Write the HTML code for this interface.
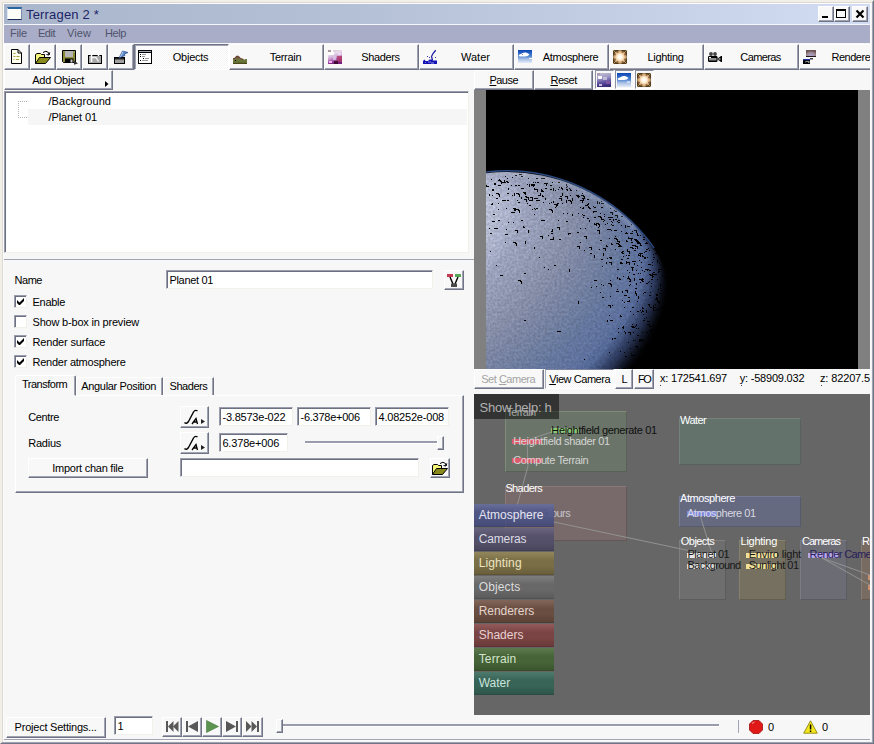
<!DOCTYPE html>
<html>
<head>
<meta charset="utf-8">
<title>Terragen 2 *</title>
<style>
html,body{margin:0;padding:0;}
body{width:874px;height:744px;overflow:hidden;background:#f1efe7;position:relative;
 font-family:"Liberation Sans",sans-serif;font-size:11px;color:#000;line-height:13px;}
.a{position:absolute;box-sizing:border-box;}
.t{position:absolute;white-space:pre;}
.btn{position:absolute;box-sizing:border-box;background:#f8f8f8;border:1px solid;border-color:#fff #707484 #707484 #fff;
 box-shadow:inset -1px -1px 0 #a0a4b2;}
.btnp{position:absolute;box-sizing:border-box;background:#fafafa repeating-conic-gradient(#ffffff 0 25%,#f5f5f5 0 50%) 0 0/2px 2px;border:1px solid;border-color:#707484 #fff #fff #707484;
 box-shadow:inset 1px 1px 0 #a0a4b2;}
.sunk{position:absolute;box-sizing:border-box;background:#fff;border:1px solid;border-color:#9a9eac #f1f0ea #f1f0ea #9a9eac;
 box-shadow:inset 1px 1px 0 #6c7080;}
.cb{position:absolute;box-sizing:border-box;width:13px;height:13px;background:#fff;border:1px solid;border-color:#9a9eac #f1f0ea #f1f0ea #9a9eac;
 box-shadow:inset 1px 1px 0 #6c7080;}
svg{position:absolute;overflow:visible;}
u{text-decoration:underline;}
</style>
</head>
<body>
<!-- p10_frame.py -->
<div class="a" style="left:0px;top:0px;width:874px;height:744px;border:1px solid;border-color:#f1efe7 #707484 #707484 #f1efe7;"></div>
<div class="a" style="left:1px;top:1px;width:872px;height:742px;border:1px solid;border-color:#f1efe7 #a0a4b2 #a0a4b2 #f1efe7;"></div>
<div class="a" style="left:2px;top:2px;width:870px;height:740px;border:1px solid;border-color:#dedad2 #f4f4f4 #f4f4f4 #dedad2;"></div>
<div class="a" style="left:3px;top:3px;width:868px;height:738px;background:#f7f7f7;border:1px solid #fcfcfc;"></div>
<div class="a" style="left:4px;top:4px;width:866px;height:20px;background:linear-gradient(90deg,#aab6cc 0%,#b4c0d6 40%,#d2dcf2 100%);"></div>
<div class="a" style="left:4px;top:24px;width:866px;height:1px;background:#f4f6fa;"></div>
<div class="a" style="left:7px;top:7px;width:15px;height:13px;background:#fdfdf8;border-top:2px solid #2a64a0;border-bottom:1px solid #1c2a5c;border-right:1px solid #7c8cb0;border-left:1px solid #dfe6f4;"></div>
<div class="t" style="left:26px;top:7px;font-size:13px;line-height:15px;color:#1c2466;letter-spacing:0.181px;">Terragen 2 *</div>
<div class="btn" style="left:818px;top:6px;width:16px;height:16px;"></div>
<div class="btn" style="left:834px;top:6px;width:16px;height:16px;"></div>
<div class="btn" style="left:852px;top:6px;width:16px;height:16px;"></div>
<svg style="left:818px;top:6px" width="50" height="16" viewBox="0 0 50 16"><rect x="4" y="10" width="6" height="2" fill="#000"/><rect x="18.5" y="4.500" width="9" height="7" fill="none" stroke="#000"/><rect x="18" y="3" width="10" height="2" fill="#000"/><path d="M38.500 4.500 L45.500 11.500 M45.500 4.500 L38.500 11.500" stroke="#000" stroke-width="2.2"/></svg>
<div class="a" style="left:4px;top:25px;width:866px;height:18px;background:#a9adc8;"></div>
<div class="t" style="left:10px;top:27px;font-size:11px;line-height:13px;color:#50546c;letter-spacing:-0.184px;">File</div>
<div class="t" style="left:38px;top:27px;font-size:11px;line-height:13px;color:#50546c;letter-spacing:-0.492px;">Edit</div>
<div class="t" style="left:67px;top:27px;font-size:11px;line-height:13px;color:#50546c;letter-spacing:0.086px;">View</div>
<div class="t" style="left:105px;top:27px;font-size:11px;line-height:13px;color:#50546c;letter-spacing:-0.406px;">Help</div>
<!-- p20_toolbar.py -->
<div class="btn" style="left:4px;top:44px;width:26px;height:26px;"></div>
<div class="btn" style="left:30px;top:44px;width:26px;height:26px;"></div>
<div class="btn" style="left:56px;top:44px;width:26px;height:26px;"></div>
<div class="btn" style="left:82px;top:44px;width:26px;height:26px;"></div>
<div class="btn" style="left:108px;top:44px;width:26px;height:26px;"></div>
<svg style="left:11px;top:49px;" width="12" height="16" viewBox="0 0 12 16"><path d="M0.5 0.5 H7 L10.5 4 V14.5 H0.5 Z" fill="#fffff0" stroke="#000"/><path d="M7 0.5 V4 H10.5" fill="none" stroke="#000"/><path d="M2.5 4.5h2 M2.5 7.5h2 M5.5 7.5h3 M2.5 10.5h1 M5 10.5h3" stroke="#a8a030" stroke-width="1"/></svg>
<svg style="left:34px;top:49px;" width="18" height="16" viewBox="0 0 18 16"><path d="M1.5 14.5 V5.5 L3 4.5 H6.5 L7.5 5.5 H10.5 V8" fill="#f4f47a" stroke="#000"/><path d="M1.5 14.5 L5.5 8.5 H16.5 L11.5 14.5 Z" fill="#8a8a1c" stroke="#000"/><path d="M9 3.5 Q12 1 14.5 3.5 L15 6 M15 6 l-2.5 -0.5 M15 6 l0.8 -2.6" fill="none" stroke="#000"/></svg>
<svg style="left:62px;top:50px;" width="17" height="15" viewBox="0 0 17 15"><path d="M0.5 0.5 H13.5 V12.5 H1.5 L0.5 11.5 Z" fill="#8a8a3a" stroke="#000"/><rect x="3" y="1" width="8" height="6" fill="#b4b4b4"/><rect x="3" y="8.5" width="8.5" height="4" fill="#000"/><rect x="8.5" y="9.5" width="2" height="3" fill="#c8c8c8"/><rect x="11.7" y="1.5" width="1" height="1" fill="#d8d8a0"/><path d="M12 10.5 L16 13.5 L12 14.8 Z" fill="#333"/></svg>
<svg style="left:88px;top:50px;" width="15" height="15" viewBox="0 0 15 15"><rect x="0.5" y="5.5" width="13" height="8" fill="#a8a8a8" stroke="#000"/><path d="M3.5 12 V3.5 L4.5 1.5 H8.5 L10.5 3.5 V6" fill="none" stroke="#fff" stroke-width="1.6"/><path d="M4 7.5 H8 L10.5 11.5" fill="none" stroke="#f4f4f4" stroke-width="1.4"/></svg>
<svg style="left:113px;top:49px;" width="17" height="16" viewBox="0 0 17 16"><rect x="1.5" y="8.5" width="10" height="6" fill="#a0a0a0" stroke="#000"/><rect x="2" y="9" width="9" height="1.5" fill="#222"/><path d="M6 9 L9.5 2 L15 3.5 L11.5 5 L12 6.5 Z" fill="#5a88c8" stroke="#28488c" stroke-width="0.7"/><path d="M10 2.5 L7.5 8" stroke="#cfe0f8" stroke-width="0.8"/></svg>
<div class="btnp" style="left:134px;top:44px;width:95px;height:26px;"></div>
<div class="t" style="left:172.8px;top:51px;font-size:11px;line-height:13px;color:#000;letter-spacing:-0.257px;">Objects</div>
<div class="btn" style="left:229px;top:44px;width:95px;height:26px;"></div>
<div class="t" style="left:269.8px;top:51px;font-size:11px;line-height:13px;color:#000;letter-spacing:-0.318px;">Terrain</div>
<div class="btn" style="left:324px;top:44px;width:95px;height:26px;"></div>
<div class="t" style="left:361.2px;top:51px;font-size:11px;line-height:13px;color:#000;letter-spacing:-0.341px;">Shaders</div>
<div class="btn" style="left:419px;top:44px;width:95px;height:26px;"></div>
<div class="t" style="left:461.0px;top:51px;font-size:11px;line-height:13px;color:#000;letter-spacing:0.013px;">Water</div>
<div class="btn" style="left:514px;top:44px;width:95px;height:26px;"></div>
<div class="t" style="left:542.8px;top:51px;font-size:11px;line-height:13px;color:#000;letter-spacing:-0.381px;">Atmosphere</div>
<div class="btn" style="left:609px;top:44px;width:95px;height:26px;"></div>
<div class="t" style="left:647.5px;top:51px;font-size:11px;line-height:13px;color:#000;letter-spacing:-0.318px;">Lighting</div>
<div class="btn" style="left:704px;top:44px;width:95px;height:26px;"></div>
<div class="t" style="left:740.3px;top:51px;font-size:11px;line-height:13px;color:#000;letter-spacing:-0.604px;">Cameras</div>
<div class="btn" style="left:799px;top:44px;width:71px;height:26px;border-right:none;box-shadow:inset 0 -1px 0 #a0a4b2;"></div>
<div class="a" style="left:799px;top:44px;width:71px;height:26px;overflow:hidden"><div class="t" style="left:32.5px;top:7px;font-size:11px;line-height:13px;color:#000;letter-spacing:-0.484px;">Renderers</div>
</div>
<svg style="left:138px;top:50px;" width="14" height="14" viewBox="0 0 14 14"><rect x="0.5" y="0.5" width="13" height="13" fill="#fff" stroke="#000"/><rect x="0" y="0" width="14" height="3" fill="#000"/><rect x="1" y="1" width="12" height="1" fill="#9aa6b4"/><rect x="4" y="0" width="9" height="1" fill="#000"/><rect x="2" y="4" width="1" height="1" fill="#000"/><rect x="2" y="6" width="1" height="1" fill="#000"/><rect x="5" y="8" width="1" height="1" fill="#000"/><rect x="2" y="10" width="1" height="1" fill="#000"/><rect x="4" y="4" width="4" height="1" fill="#9a9a9a"/><rect x="4" y="6" width="3" height="1" fill="#9a9a9a"/><rect x="7" y="8" width="4" height="1" fill="#9a9a9a"/><rect x="4" y="10" width="6" height="1" fill="#9a9a9a"/></svg>
<svg style="left:233px;top:55px;" width="14" height="9" viewBox="0 0 14 9"><defs><linearGradient id="te1" x1="0" y1="0" x2="0" y2="1"><stop offset="0.1" stop-color="#74483a"/><stop offset="0.5" stop-color="#6e7a3e"/><stop offset="0.85" stop-color="#5e6e32"/><stop offset="1" stop-color="#4c4a1c"/></linearGradient></defs><path d="M0 9 V3 H1.5 L3.5 1 H5.5 L8 3.5 H9.5 L10.5 4.5 H12 L12.5 4 H14 V9 Z" fill="url(#te1)"/><path d="M0 3.5 H1.5 L3.5 1.2 H5.5 L8 4 H9.5 L10.5 5" fill="none" stroke="#6a4434" stroke-width="1"/><rect x="0" y="8" width="14" height="1" fill="#4c4a1c"/><rect x="2" y="5" width="1" height="1" fill="#000"/></svg>
<svg style="left:328px;top:50px;" width="14" height="14" viewBox="0 0 14 14"><defs><linearGradient id="sh1" x1="0" y1="0" x2="0.3" y2="1"><stop offset="0" stop-color="#d4c6d0"/><stop offset="0.35" stop-color="#e8dcec"/><stop offset="0.6" stop-color="#d0a4d4"/><stop offset="0.82" stop-color="#a050a4"/><stop offset="1" stop-color="#742080"/></linearGradient></defs><rect width="14" height="14" fill="url(#sh1)"/><rect x="0" y="2" width="6" height="3" fill="#fff"/><rect x="2" y="0" width="3" height="2" fill="#fff"/><rect x="0" y="0" width="3" height="2" fill="#a89898"/><rect x="9" y="6" width="5" height="6" fill="#b03868" opacity="0.8"/><rect x="6" y="11" width="4" height="3" fill="#3a0828" opacity="0.9"/><rect x="1" y="11" width="3" height="2" fill="#f4b0f0"/><rect x="5" y="6" width="3" height="4" fill="#d8c8e4" opacity="0.8"/><rect x="10" y="3" width="3" height="2" fill="#f0e4f4" opacity="0.8"/></svg>
<svg style="left:423px;top:50px;" width="14" height="14" viewBox="0 0 14 14"><path d="M0 14 V11 L1.5 9.5 L2.5 11 H5 L6.5 9.5 H9 L10 10.5 H14 V14 Z" fill="#1414b4"/><path d="M9.5 10 L8.5 6.5 L10 3.5 L12.5 0.5" fill="none" stroke="#2424a4" stroke-width="1.3"/><rect x="4" y="6" width="1" height="1" fill="#3434a4"/><rect x="6" y="7" width="1" height="1" fill="#3434a4"/><rect x="12" y="7" width="1" height="1" fill="#3434a4"/><rect x="12" y="0" width="1" height="1" fill="#3434a4"/><rect x="2" y="12" width="1" height="1" fill="#7a7ae0"/><rect x="5" y="11.5" width="3" height="1" fill="#8a8ae8"/><rect x="8" y="12.5" width="3" height="1" fill="#9a9af0"/></svg>
<svg style="left:518px;top:50px;" width="14" height="13" viewBox="0 0 14 13"><defs><linearGradient id="at1" x1="0" y1="0" x2="0" y2="1"><stop offset="0" stop-color="#0a44b4"/><stop offset="0.45" stop-color="#4a80d0"/><stop offset="0.7" stop-color="#a8c0e4"/><stop offset="1" stop-color="#e4ecf8"/></linearGradient></defs><rect width="14" height="13" fill="url(#at1)"/><path d="M0.5 5.5 Q1 4 3 4 Q5 2 8 2.5 Q10.5 3.5 11.5 4.5 Q10 6.5 7 6.5 H1.5 Z" fill="#fff"/><rect x="11" y="8" width="3" height="1" fill="#fff"/><rect x="4" y="4" width="1" height="1" fill="#8898c0"/></svg>
<svg style="left:613px;top:50px;" width="14" height="14" viewBox="0 0 14 14"><defs><radialGradient id="li1"><stop offset="0" stop-color="#ffffff"/><stop offset="0.38" stop-color="#fff2dc"/><stop offset="0.62" stop-color="#ecc494"/><stop offset="0.86" stop-color="#b48858"/><stop offset="1" stop-color="#5c4420"/></radialGradient></defs><rect width="14" height="14" fill="#3c2c14"/><rect width="14" height="14" fill="url(#li1)"/><path d="M0 0L4 4M14 0L10 4M0 14L4 10M14 14L10 10M7 0V2.500M7 14V11.500M0 7H2.500M14 7H11.500" stroke="#f8e0b8" stroke-width="0.7" opacity="0.7"/><path d="M3.500 0L5 3M10.500 0L9 3M3.500 14L5 11M10.500 14L9 11M0 3.500L3 5M0 10.500L3 9M14 3.500L11 5M14 10.500L11 9" stroke="#2c1c08" stroke-width="0.8" opacity="0.6"/></svg>
<svg style="left:708px;top:52px;" width="14" height="10" viewBox="0 0 14 10"><circle cx="3" cy="2" r="1.9" fill="#444"/><circle cx="7" cy="2" r="1.9" fill="#444"/><rect x="0" y="4" width="9.5" height="6" rx="1.2" fill="#000"/><rect x="1" y="6" width="7.5" height="2.5" fill="#909090"/><rect x="1" y="5" width="2" height="1" fill="#fff"/><path d="M9 7 L13 4 H14 V10 H13 Z" fill="#000"/><rect x="10.5" y="6" width="2" height="2" fill="#808080"/></svg>
<svg style="left:803px;top:50px;" width="14" height="14" viewBox="0 0 14 14"><defs><radialGradient id="re1" cx="0.5" cy="0.8" r="0.7"><stop offset="0" stop-color="#a8a0d8"/><stop offset="0.6" stop-color="#a08c94"/><stop offset="1" stop-color="#6c5454"/></radialGradient></defs><rect x="3" y="0" width="10" height="7" fill="url(#re1)"/><rect x="3" y="6" width="10" height="1" fill="#201818"/><rect x="7" y="8" width="3" height="1.5" fill="#404040"/><rect x="0" y="9" width="7" height="5" fill="#000"/><rect x="0" y="9" width="7" height="1.2" fill="#2434a4"/><rect x="2" y="11" width="4.5" height="2" fill="#909090"/><path d="M1 11 L3 12.5 H5" stroke="#000" fill="none"/></svg>
<!-- p30_left.py -->
<div class="btn" style="left:4px;top:70px;width:109px;height:20px;"></div>
<div class="t" style="left:32.3px;top:74px;font-size:11px;line-height:13px;color:#000;letter-spacing:-0.272px;">Add Object</div>
<svg style="left:105px;top:81px;" width="4" height="6" viewBox="0 0 4 6"><path d="M0 0 L3.5 3 L0 6 Z" fill="#000"/></svg>
<div class="sunk" style="left:4px;top:91px;width:465px;height:162px;"></div>
<div class="a" style="left:28px;top:109px;width:439px;height:16px;background:#f6f6f6;"></div>
<div class="a" style="left:18px;top:101px;width:1px;height:17px;background:linear-gradient(#b4b4b4 50%,transparent 50%) 0 0/1px 2px;"></div>
<div class="a" style="left:18px;top:101px;width:9px;height:1px;background:linear-gradient(90deg,#b4b4b4 50%,transparent 50%) 0 0/2px 1px;"></div>
<div class="a" style="left:18px;top:117px;width:9px;height:1px;background:linear-gradient(90deg,#b4b4b4 50%,transparent 50%) 0 0/2px 1px;"></div>
<div class="t" style="left:48.5px;top:95px;font-size:11px;line-height:13px;color:#000;letter-spacing:0.067px;">/Background</div>
<div class="t" style="left:48.5px;top:111px;font-size:11px;line-height:13px;color:#000;letter-spacing:-0.105px;">/Planet 01</div>
<div class="a" style="left:4px;top:259px;width:470px;height:1px;background:#a0a4b2;"></div>
<div class="t" style="left:14.5px;top:274px;font-size:11px;line-height:13px;color:#000;letter-spacing:-0.461px;">Name</div>
<div class="sunk" style="left:166px;top:270px;width:267px;height:19px;"></div>
<div class="t" style="left:169.5px;top:274px;font-size:11px;line-height:13px;color:#000;letter-spacing:-0.332px;">Planet 01</div>
<div class="btn" style="left:444px;top:270px;width:20px;height:20px;"></div>
<svg style="left:444px;top:270px;" width="20" height="20" viewBox="0 0 20 20"><rect x="3" y="4" width="6" height="3" fill="#c83850"/><rect x="11" y="4" width="6" height="3" fill="#58a858"/><path d="M6 7 L9 14 M14 7 L11 14" fill="none" stroke="#000" stroke-width="1.4"/><rect x="7" y="13.500" width="6" height="3.500" fill="#484848"/></svg>
<div class="cb" style="left:14px;top:295px"></div>
<svg style="left:17px;top:298px;" width="7" height="7" viewBox="0 0 7 7"><path d="M0 2 V5 L2 7 H3 L7 3 V0 L2.5 4.5 Z" fill="#000"/></svg>
<div class="t" style="left:32.5px;top:296px;font-size:11px;line-height:13px;color:#000;letter-spacing:-0.278px;">Enable</div>
<div class="cb" style="left:14px;top:315px"></div>
<div class="t" style="left:32.5px;top:316px;font-size:11px;line-height:13px;color:#000;letter-spacing:-0.194px;">Show b-box in preview</div>
<div class="cb" style="left:14px;top:335px"></div>
<svg style="left:17px;top:338px;" width="7" height="7" viewBox="0 0 7 7"><path d="M0 2 V5 L2 7 H3 L7 3 V0 L2.5 4.5 Z" fill="#000"/></svg>
<div class="t" style="left:32.5px;top:336px;font-size:11px;line-height:13px;color:#000;letter-spacing:-0.173px;">Render surface</div>
<div class="cb" style="left:14px;top:355px"></div>
<svg style="left:17px;top:358px;" width="7" height="7" viewBox="0 0 7 7"><path d="M0 2 V5 L2 7 H3 L7 3 V0 L2.5 4.5 Z" fill="#000"/></svg>
<div class="t" style="left:32.5px;top:356px;font-size:11px;line-height:13px;color:#000;letter-spacing:-0.243px;">Render atmosphere</div>
<div class="a" style="left:15px;top:395px;width:449px;height:98px;background:#f7f7f7;border:1px solid;border-color:#fff #707484 #707484 #fff;box-shadow:inset -1px -1px 0 #a0a4b2;"></div>
<div class="a" style="left:15px;top:375px;width:61px;height:21px;background:#f7f7f7;border:1px solid;border-color:#fff #707484 transparent #fff;box-shadow:inset -1px 0 0 #a0a4b2;border-radius:2px 2px 0 0;"></div>
<div class="a" style="left:16px;top:395px;width:58px;height:2px;background:#f7f7f7;"></div>
<div class="t" style="left:22px;top:378px;font-size:11px;line-height:13px;color:#000;letter-spacing:-0.491px;">Transform</div>
<div class="a" style="left:76px;top:377px;width:87px;height:18px;background:#f7f7f7;border:1px solid;border-color:#fff #707484 transparent #fff;box-shadow:inset -1px 0 0 #a0a4b2;border-bottom:none;"></div>
<div class="t" style="left:81.3px;top:380px;font-size:11px;line-height:13px;color:#000;letter-spacing:-0.338px;">Angular Position</div>
<div class="a" style="left:163px;top:377px;width:51px;height:18px;background:#f7f7f7;border:1px solid;border-color:#fff #707484 transparent #fff;box-shadow:inset -1px 0 0 #a0a4b2;border-bottom:none;"></div>
<div class="t" style="left:169.5px;top:380px;font-size:11px;line-height:13px;color:#000;letter-spacing:-0.441px;">Shaders</div>
<div class="t" style="left:28.3px;top:411px;font-size:11px;line-height:13px;color:#000;letter-spacing:-0.372px;">Centre</div>
<div class="btn" style="left:180px;top:406px;width:29px;height:22px;"></div>
<svg style="left:183px;top:409px;" width="22" height="16" viewBox="0 0 22 16"><path d="M1.5 13.5 Q3.5 15.5 5.5 12.5 L10.5 3 Q12 0.5 14.5 1.8" fill="none" stroke="#000" stroke-width="1.4"/><path d="M9 15 L13 9.5 L14.5 15 M10.5 13 H14" fill="none" stroke="#000" stroke-width="1.3"/><path d="M18 10 L22 12.5 L18 15 Z" fill="#222"/></svg>
<div class="sunk" style="left:219px;top:407px;width:74px;height:19px;"></div>
<div class="t" style="left:222.5px;top:411px;font-size:11px;line-height:13px;color:#000;letter-spacing:-0.221px;">-3.8573e-022</div>
<div class="sunk" style="left:297px;top:407px;width:74px;height:19px;"></div>
<div class="t" style="left:300.5px;top:411px;font-size:11px;line-height:13px;color:#000;letter-spacing:-0.254px;">-6.378e+006</div>
<div class="sunk" style="left:375px;top:407px;width:74px;height:19px;"></div>
<div class="t" style="left:378.5px;top:411px;font-size:11px;line-height:13px;color:#000;letter-spacing:-0.201px;">4.08252e-008</div>
<div class="t" style="left:28.3px;top:437px;font-size:11px;line-height:13px;color:#000;letter-spacing:-0.258px;">Radius</div>
<div class="btn" style="left:180px;top:432px;width:29px;height:22px;"></div>
<svg style="left:183px;top:435px;" width="22" height="16" viewBox="0 0 22 16"><path d="M1.5 13.5 Q3.5 15.5 5.5 12.5 L10.5 3 Q12 0.5 14.5 1.8" fill="none" stroke="#000" stroke-width="1.4"/><path d="M9 15 L13 9.5 L14.5 15 M10.5 13 H14" fill="none" stroke="#000" stroke-width="1.3"/><path d="M18 10 L22 12.5 L18 15 Z" fill="#222"/></svg>
<div class="sunk" style="left:219px;top:433px;width:69px;height:19px;"></div>
<div class="t" style="left:222.4px;top:437px;font-size:11px;line-height:13px;color:#000;letter-spacing:-0.162px;">6.378e+006</div>
<div class="a" style="left:305px;top:441px;width:133px;height:2px;background:#989cac;"></div>
<div class="a" style="left:305px;top:443px;width:133px;height:1px;background:#fff;"></div>
<div class="a" style="left:437px;top:436px;width:7px;height:14px;background:#f7f7f7;border:1px solid;border-color:#fff #707484 #707484 #fff;box-shadow:inset -1px -1px 0 #a0a4b2;"></div>
<div class="btn" style="left:28px;top:458px;width:120px;height:20px;"></div>
<div class="t" style="left:52.2px;top:462px;font-size:11px;line-height:13px;color:#000;letter-spacing:-0.250px;">Import chan file</div>
<div class="sunk" style="left:180px;top:458px;width:239px;height:19px;"></div>
<div class="btn" style="left:430px;top:458px;width:20px;height:20px;"></div>
<svg style="left:431px;top:460px;" width="18" height="16" viewBox="0 0 18 16"><path d="M1.5 14.5 V5.5 L3 4.5 H6.5 L7.5 5.5 H10.5 V8" fill="#f4f47a" stroke="#000"/><path d="M1.5 14.5 L5.5 8.5 H16.5 L11.5 14.5 Z" fill="#8a8a1c" stroke="#000"/><path d="M9 3.5 Q12 1 14.5 3.5 L15 6 M15 6 l-2.5 -0.5 M15 6 l0.8 -2.6" fill="none" stroke="#000"/></svg>
<!-- p40_preview.py -->
<div class="btn" style="left:474px;top:70px;width:60px;height:20px;"></div>
<div class="t" style="left:489.5px;top:74px;font-size:11px;line-height:13px;color:#000;letter-spacing:-0.541px;"><u>P</u>ause</div>
<div class="btn" style="left:534px;top:70px;width:59px;height:20px;"></div>
<div class="t" style="left:550.4px;top:74px;font-size:11px;line-height:13px;color:#000;letter-spacing:-0.450px;"><u>R</u>eset</div>
<div class="a" style="left:595px;top:70px;width:19px;height:19px;background:#f7f7f7;border:1px solid;border-color:#8c90a0 #fff #fff #8c90a0;"></div>
<div class="a" style="left:615px;top:70px;width:19px;height:19px;background:#f7f7f7;border:1px solid;border-color:#8c90a0 #fff #fff #8c90a0;"></div>
<div class="a" style="left:635px;top:70px;width:19px;height:19px;background:#f7f7f7;border:1px solid;border-color:#8c90a0 #fff #fff #8c90a0;"></div>
<svg style="left:597px;top:73px;" width="14" height="14" viewBox="0 0 14 14"><defs><linearGradient id="pv1" x1="0" y1="0" x2="0.2" y2="1"><stop offset="0" stop-color="#c8c0d0"/><stop offset="0.4" stop-color="#9c98c4"/><stop offset="0.75" stop-color="#5c4c9c"/><stop offset="1" stop-color="#3c2c7c"/></linearGradient></defs><rect width="14" height="14" fill="url(#pv1)"/><rect x="1" y="3" width="4" height="3" fill="#fff" opacity="0.9"/><rect x="0" y="0" width="3" height="2" fill="#b098a8"/><rect x="6" y="4" width="4" height="3" fill="#d8d0e8" opacity="0.7"/><rect x="9" y="8" width="4" height="3" fill="#8c5ca4" opacity="0.8"/><rect x="2" y="11" width="3" height="2" fill="#e8d8f4" opacity="0.8"/></svg>
<svg style="left:617px;top:73px;" width="14" height="14" viewBox="0 0 14 14"><defs><linearGradient id="pv2" x1="0" y1="0" x2="0" y2="1"><stop offset="0" stop-color="#0a44b4"/><stop offset="0.45" stop-color="#4a80d0"/><stop offset="0.7" stop-color="#a8c0e4"/><stop offset="1" stop-color="#e4ecf8"/></linearGradient></defs><rect width="14" height="14" fill="url(#pv2)"/><path d="M0.5 6 Q1 4.5 3 4.5 Q5 2.5 8 3 Q10.5 4 11.5 5 Q10 7 7 7 H1.5 Z" fill="#fff"/><rect x="10" y="8.5" width="3" height="1" fill="#fff"/></svg>
<svg style="left:637px;top:73px;" width="14" height="14" viewBox="0 0 14 14"><rect width="14" height="14" fill="#3c2c14"/><rect width="14" height="14" fill="url(#li1)"/><path d="M0 0L4 4M14 0L10 4M0 14L4 10M14 14L10 10M7 0V2.500M7 14V11.500M0 7H2.500M14 7H11.500" stroke="#f8e0b8" stroke-width="0.7" opacity="0.7"/><path d="M3.500 0L5 3M10.500 0L9 3M3.500 14L5 11M10.500 14L9 11M0 3.500L3 5M0 10.500L3 9M14 3.500L11 5M14 10.500L11 9" stroke="#2c1c08" stroke-width="0.8" opacity="0.6"/></svg>
<div class="a" style="left:474px;top:90px;width:396px;height:279px;background:#808080;"></div>
<svg style="left:486px;top:90px;overflow:hidden;" width="372" height="279" viewBox="0 0 372 279"><defs>
<clipPath id="pvc"><rect x="0" y="0" width="372" height="279"/></clipPath>
<clipPath id="plc"><circle cx="21" cy="261" r="179"/></clipPath>
<filter id="plblur" x="-20%" y="-20%" width="140%" height="140%"><feGaussianBlur stdDeviation="2.5"/></filter>
<filter id="plsh" filterUnits="userSpaceOnUse" x="-10" y="60" width="240" height="230" color-interpolation-filters="sRGB"><feGaussianBlur in="SourceGraphic" stdDeviation="1.6" result="b"/><feTurbulence type="fractalNoise" baseFrequency="0.42" numOctaves="2" seed="5" result="n"/><feColorMatrix in="n" type="matrix" values="0.3 0 0 0 0.75  0.3 0 0 0 0.75  0.3 0 0 0 0.75  0 0 0 0 1" result="n2"/><feComposite in="b" in2="n2" operator="arithmetic" k1="1" k2="0" k3="0" k4="0"/></filter>
</defs>
<rect width="372" height="279" fill="#000"/>
<g clip-path="url(#pvc)">
<path d="M-2 82.200 A180.200 180.200 0 0 1 168 158" fill="none" stroke="#3c68b4" stroke-width="1.6" opacity="0.7"/>
<g clip-path="url(#plc)">
<g filter="url(#plsh)"><rect x="-10" y="60" width="240" height="230" fill="#000"/>
<path d="M-124.0 372.0L-130.1 363.5L-135.8 354.5L-141.1 344.9L-146.1 334.5L-150.8 322.9L-154.9 309.9L-158.4 294.9L-160.8 277.4L-161.5 256.8L-159.4 232.6L-152.6 204.3L-138.9 172.9L-116.4 140.7L-84.9 112.3L-47.8 91.9L-10.0 81.1L24.2 78.4L53.1 81.3L76.8 87.1L96.0 94.5L111.7 102.5L124.7 110.7L135.7 118.9L145.1 127.1L153.4 135.2L160.7 143.4L167.3 151.7L173.3 160.3L175.3 171.2L178.4 181.4L179.6 192.6L178.8 204.8L176.1 217.7L171.5 231.2L165.0 245.2L156.8 259.4L146.9 273.7L135.5 288.0L122.6 301.9L108.6 315.4L93.5 328.2L77.5 340.3L60.8 351.5L43.7 361.5L26.4 370.4L9.0 378.0L-8.1 384.1L-24.9 388.8L-41.0 391.9L-56.3 393.5L-70.6 393.4L-83.7 391.7L-95.5 388.5L-105.7 383.7L-114.3 377.4Z" fill="#06080e"/>
<path d="M-126.8 368.2L-132.7 359.5L-138.2 350.4L-143.3 340.6L-148.1 329.9L-152.4 318.1L-156.3 304.7L-159.3 289.5L-161.3 271.9L-161.3 251.3L-158.4 227.3L-151.0 199.7L-137.0 169.5L-114.9 139.1L-84.9 112.3L-49.7 92.7L-13.7 81.8L19.3 78.4L47.8 80.4L71.5 85.5L90.9 92.3L106.9 99.9L120.3 107.8L131.7 115.8L141.4 123.8L150.0 131.7L157.5 139.8L164.4 148.0L170.6 156.4L172.7 167.4L175.8 177.6L177.0 188.8L176.2 201.0L173.5 213.9L168.9 227.4L162.4 241.4L154.2 255.7L144.3 270.0L132.9 284.2L120.0 298.2L106.0 311.7L90.8 324.5L74.8 336.6L58.2 347.8L41.1 357.9L23.7 366.7L6.3 374.3L-10.8 380.5L-27.6 385.1L-43.8 388.3L-59.1 389.8L-73.4 389.7L-86.5 388.1L-98.2 384.8L-108.5 380.0L-117.1 373.8Z" fill="#121727"/>
<path d="M-126.6 362.3L-135.2 355.5L-140.5 346.2L-145.4 336.2L-149.9 325.3L-153.9 313.3L-157.4 299.7L-160.1 284.3L-161.5 266.6L-161.0 246.0L-157.4 222.3L-149.4 195.5L-135.2 166.5L-113.6 137.7L-84.9 112.3L-51.5 93.4L-17.2 82.5L14.8 78.5L42.8 79.7L66.3 84.1L85.9 90.4L102.3 97.5L116.0 105.1L127.6 112.8L137.7 120.6L146.5 128.4L154.3 136.3L161.4 144.3L165.0 154.7L170.0 163.7L173.1 173.8L174.3 185.1L173.5 197.2L170.8 210.2L166.2 223.7L159.7 237.7L151.5 251.9L141.6 266.2L130.2 280.4L117.3 294.4L103.3 307.9L88.2 320.8L72.2 332.8L55.5 344.0L38.4 354.1L21.0 363.0L3.7 370.5L-13.5 376.7L-30.3 381.3L-46.4 384.5L-61.7 386.0L-76.1 385.9L-89.2 384.3L-100.9 381.0L-111.1 376.2L-119.7 370.0Z" fill="#202944"/>
<path d="M-129.1 358.4L-137.6 351.5L-142.6 342.0L-147.3 331.8L-151.5 320.8L-155.3 308.5L-158.4 294.8L-160.7 279.2L-161.6 261.4L-160.5 241.0L-156.4 217.6L-147.9 191.6L-133.6 163.8L-112.5 136.4L-84.9 112.3L-53.1 94.1L-20.3 83.2L10.6 78.7L38.0 79.2L61.4 83.0L81.1 88.6L97.6 95.3L111.6 102.5L123.6 109.9L133.9 117.5L143.0 125.1L151.1 132.9L158.4 140.7L162.2 151.0L167.2 160.0L170.3 170.2L171.5 181.4L170.7 193.5L168.0 206.4L163.4 220.0L156.9 233.9L148.7 248.1L138.8 262.4L127.4 276.7L114.6 290.6L100.5 304.1L85.4 316.9L69.4 329.0L52.8 340.1L35.7 350.2L18.4 359.1L1.0 366.6L-16.2 372.8L-32.9 377.5L-49.0 380.6L-64.3 382.1L-78.6 382.1L-91.7 380.4L-103.5 377.1L-113.7 372.4L-122.3 366.1Z" fill="#2e3c61"/>
<path d="M-131.5 354.5L-139.9 347.3L-144.7 337.7L-149.1 327.4L-153.0 316.2L-156.5 303.8L-159.3 289.9L-161.1 274.3L-161.5 256.5L-159.9 236.2L-155.2 213.2L-146.3 188.0L-132.0 161.3L-111.3 135.2L-84.9 112.3L-54.6 94.8L-23.2 83.8L6.7 79.0L33.5 78.8L56.7 81.9L76.4 87.0L93.1 93.3L107.3 100.1L119.5 107.3L130.1 114.6L139.4 122.0L147.7 129.5L155.2 137.2L159.2 147.5L164.2 156.4L167.3 166.6L168.5 177.8L167.7 189.9L165.0 202.8L160.4 216.3L154.0 230.2L145.7 244.4L135.9 258.7L124.5 272.8L111.7 286.8L97.7 300.2L82.6 313.0L66.6 325.1L50.0 336.2L33.0 346.3L15.7 355.1L-1.6 362.7L-18.8 368.8L-35.5 373.5L-51.6 376.6L-66.9 378.1L-81.1 378.0L-94.2 376.4L-105.9 373.1L-116.1 368.4L-124.7 362.1Z" fill="#3a4a74"/>
<path d="M-133.7 350.4L-142.1 343.2L-146.6 333.4L-150.7 323.0L-154.4 311.6L-157.6 299.1L-160.0 285.1L-161.4 269.4L-161.3 251.7L-159.2 231.6L-154.0 209.1L-144.8 184.6L-130.4 159.0L-110.3 134.1L-84.9 112.3L-55.9 95.4L-25.9 84.5L3.0 79.3L29.2 78.6L52.1 81.1L71.8 85.6L88.6 91.4L103.0 97.9L115.4 104.7L126.2 111.8L135.7 119.0L144.3 126.3L152.0 133.8L156.1 144.0L161.1 152.9L164.2 163.0L165.4 174.2L164.6 186.3L161.9 199.1L157.3 212.6L150.9 226.5L142.7 240.7L132.8 254.9L121.5 269.0L108.7 282.9L94.7 296.3L79.7 309.1L63.8 321.1L47.3 332.2L30.2 342.2L13.0 351.1L-4.3 358.6L-21.4 364.7L-38.0 369.3L-54.1 372.4L-69.3 374.0L-83.5 373.9L-96.6 372.3L-108.2 369.0L-118.4 364.3L-126.9 358.0Z" fill="#4d6190"/>
<path d="M-136.6 344.8L-144.8 337.5L-149.0 327.6L-152.8 317.1L-156.1 305.6L-158.8 292.9L-160.7 278.9L-161.6 263.1L-160.9 245.5L-158.1 225.7L-152.4 203.9L-142.8 180.4L-128.5 156.2L-109.0 132.8L-84.9 112.3L-57.6 96.2L-29.1 85.4L-1.6 79.8L23.8 78.4L46.3 80.2L65.8 84.0L82.7 89.2L97.3 95.1L110.0 101.6L121.0 108.3L130.8 115.1L139.6 122.2L147.5 129.3L151.8 139.5L156.7 148.4L159.8 158.5L161.0 169.6L160.2 181.6L157.5 194.4L153.0 207.8L146.6 221.6L138.4 235.7L128.6 249.8L117.3 263.9L104.6 277.7L90.7 291.0L75.8 303.8L60.0 315.7L43.5 326.7L26.6 336.7L9.4 345.5L-7.8 353.0L-24.8 359.1L-41.3 363.7L-57.3 366.8L-72.5 368.3L-86.6 368.2L-99.6 366.6L-111.2 363.4L-121.3 358.6L-129.8 352.4Z" fill="#6076a9"/>
<path d="M-139.7 337.6L-144.6 328.9L-151.7 320.3L-155.0 309.6L-157.8 298.0L-160.0 285.2L-161.3 271.2L-161.5 255.5L-160.1 238.1L-156.7 218.9L-150.3 197.9L-140.4 175.7L-126.3 153.1L-107.6 131.4L-84.9 112.3L-59.4 97.1L-32.9 86.5L-6.8 80.6L17.4 78.5L39.3 79.3L58.6 82.3L75.5 86.7L90.2 92.1L103.1 97.9L114.4 104.1L124.5 110.6L133.5 117.2L139.3 126.7L146.0 134.2L150.9 143.0L154.0 152.9L155.1 164.0L154.4 175.9L151.7 188.5L147.2 201.8L140.8 215.5L132.8 229.5L123.1 243.5L111.9 257.4L99.3 271.1L85.5 284.3L70.7 296.9L55.0 308.8L38.7 319.7L21.9 329.6L4.9 338.3L-12.1 345.7L-28.9 351.7L-45.4 356.3L-61.2 359.4L-76.2 360.9L-90.2 360.8L-103.1 359.2L-114.6 356.0L-124.6 351.3L-133.0 345.2Z" fill="#697eaf"/>
<path d="M-142.5 330.2L-147.4 321.5L-154.1 312.7L-156.9 302.0L-159.2 290.4L-160.8 277.6L-161.6 263.6L-161.1 248.1L-159.1 231.1L-155.0 212.5L-148.2 192.4L-138.1 171.4L-124.1 150.2L-106.3 130.1L-84.9 112.3L-61.1 97.9L-36.2 87.6L-11.7 81.4L11.5 78.7L32.7 78.8L51.7 81.0L68.4 84.7L83.2 89.3L96.2 94.6L107.7 100.3L117.9 106.3L127.2 112.5L133.2 121.7L139.9 129.1L144.7 137.8L147.7 147.7L148.9 158.5L148.1 170.3L145.5 182.8L141.0 195.9L134.8 209.5L126.8 223.3L117.2 237.1L106.1 250.9L93.7 264.4L80.1 277.5L65.4 289.9L49.9 301.7L33.8 312.5L17.2 322.2L0.4 330.8L-16.4 338.1L-33.0 344.1L-49.3 348.6L-64.9 351.7L-79.7 353.1L-93.6 353.1L-106.3 351.5L-117.6 348.3L-127.6 343.7L-135.9 337.6Z" fill="#6c81af"/>
<path d="M-144.9 322.4L-149.7 313.9L-156.2 305.0L-158.5 294.3L-160.3 282.7L-161.4 270.0L-161.5 256.2L-160.5 241.0L-157.9 224.4L-153.2 206.4L-146.0 187.3L-135.8 167.4L-122.1 147.6L-105.0 128.9L-84.9 112.3L-62.6 98.7L-39.3 88.7L-16.2 82.2L5.9 79.0L26.4 78.5L44.9 80.0L61.4 83.0L76.1 86.9L89.2 91.6L100.8 96.8L111.2 102.3L120.6 108.0L126.8 117.0L133.3 124.3L138.1 132.9L141.1 142.6L142.2 153.3L141.4 164.9L138.9 177.3L134.5 190.2L128.3 203.5L120.4 217.1L111.0 230.7L100.1 244.3L87.8 257.6L74.4 270.5L60.0 282.8L44.7 294.3L28.8 305.0L12.5 314.6L-4.0 323.1L-20.6 330.3L-37.0 336.1L-53.0 340.6L-68.4 343.6L-83.0 345.0L-96.7 345.0L-109.2 343.4L-120.4 340.3L-130.2 335.7L-138.4 329.7Z" fill="#6f83af"/>
<path d="M-146.8 314.4L-151.5 306.0L-158.0 297.1L-159.8 286.5L-161.0 275.0L-161.6 262.5L-161.2 248.8L-159.6 234.0L-156.4 217.9L-151.3 200.6L-143.8 182.4L-133.5 163.8L-120.2 145.3L-103.9 127.8L-84.9 112.3L-64.0 99.4L-42.2 89.7L-20.4 83.2L0.7 79.6L20.3 78.4L38.3 79.2L54.5 81.5L69.1 84.9L82.1 88.9L93.8 93.5L104.2 98.5L113.7 103.7L119.9 112.7L126.3 119.8L131.0 128.3L133.9 137.8L135.0 148.3L134.3 159.7L131.8 171.8L127.5 184.5L121.4 197.6L113.7 210.9L104.4 224.3L93.7 237.7L81.7 250.7L68.5 263.4L54.3 275.4L39.3 286.8L23.7 297.2L7.7 306.7L-8.5 315.0L-24.8 322.1L-40.9 327.8L-56.6 332.2L-71.8 335.1L-86.1 336.6L-99.5 336.5L-111.8 335.0L-122.8 331.9L-132.4 327.4L-140.4 321.6Z" fill="#7487af"/>
<path d="M-148.4 306.0L-153.0 297.8L-155.8 288.4L-160.7 278.5L-161.5 267.2L-161.5 254.9L-160.5 241.6L-158.4 227.1L-154.8 211.6L-149.3 195.1L-141.6 177.9L-131.3 160.3L-118.4 143.1L-102.8 126.8L-84.9 112.3L-65.3 100.1L-44.9 90.7L-24.3 84.1L-4.4 80.2L14.4 78.5L31.8 78.7L47.7 80.4L62.0 83.1L74.9 86.6L86.5 90.6L97.0 95.0L104.8 102.9L112.6 108.6L118.9 115.7L123.5 123.9L126.4 133.2L127.4 143.5L126.7 154.7L124.3 166.5L120.0 178.9L114.1 191.7L106.5 204.8L97.5 217.9L87.0 231.0L75.2 243.7L62.3 256.1L48.5 267.9L33.8 279.0L18.5 289.2L2.9 298.5L-13.0 306.6L-29.0 313.5L-44.7 319.2L-60.1 323.5L-74.9 326.3L-88.9 327.7L-102.1 327.7L-114.1 326.1L-124.8 323.2L-134.2 318.8L-142.1 313.0Z" fill="#7a8bb1"/>
<path d="M-149.4 297.3L-153.9 289.3L-156.7 280.2L-161.3 270.3L-161.6 259.2L-161.1 247.3L-159.6 234.3L-157.0 220.4L-152.9 205.5L-147.1 189.8L-139.3 173.5L-129.1 157.1L-116.6 141.0L-101.8 125.8L-84.9 112.3L-66.6 100.8L-47.4 91.7L-28.1 85.1L-9.3 80.9L8.7 78.8L25.4 78.5L40.8 79.5L54.8 81.6L67.6 84.5L79.1 87.9L89.5 91.7L97.2 99.4L104.9 105.0L111.0 111.8L115.5 119.9L118.3 128.9L119.3 139.0L118.6 149.8L116.2 161.4L112.1 173.5L106.3 186.0L99.0 198.7L90.1 211.5L79.9 224.2L68.5 236.6L55.9 248.7L42.4 260.2L28.1 271.0L13.2 280.9L-2.1 289.9L-17.6 297.9L-33.1 304.6L-48.4 310.1L-63.4 314.3L-77.8 317.1L-91.5 318.5L-104.3 318.4L-116.0 316.9L-126.5 314.0L-135.6 309.7L-143.3 304.1Z" fill="#818fb2"/>
<path d="M-149.9 288.2L-154.3 280.4L-157.0 271.6L-158.0 261.9L-161.3 251.1L-160.3 239.5L-158.4 227.0L-155.3 213.7L-150.9 199.5L-144.8 184.6L-136.9 169.3L-126.9 154.0L-114.8 139.0L-100.7 124.9L-84.9 112.3L-67.8 101.4L-49.9 92.7L-31.8 86.2L-14.0 81.8L3.1 79.3L19.1 78.4L33.9 78.9L47.6 80.4L60.0 82.6L71.3 85.5L80.4 92.1L89.2 96.3L96.7 101.7L102.6 108.4L107.0 116.1L109.7 125.0L110.7 134.7L110.0 145.2L107.7 156.4L103.7 168.1L98.1 180.2L90.9 192.6L82.4 205.0L72.5 217.3L61.3 229.4L49.2 241.1L36.1 252.2L22.2 262.7L7.8 272.4L-7.0 281.1L-22.1 288.8L-37.1 295.3L-52.0 300.7L-66.5 304.7L-80.5 307.4L-93.8 308.7L-106.2 308.7L-117.5 307.3L-127.7 304.4L-136.6 300.3L-144.0 294.9Z" fill="#8793b5"/>
<path d="M-149.9 278.7L-154.1 271.2L-156.7 262.7L-157.7 253.4L-160.7 242.8L-159.2 231.7L-156.9 219.7L-153.4 207.0L-148.7 193.5L-142.4 179.6L-134.5 165.3L-124.7 151.0L-113.1 137.1L-99.8 124.1L-84.9 112.3L-68.9 102.1L-52.2 93.7L-35.3 87.3L-18.6 82.8L-2.5 79.9L12.7 78.6L27.0 78.5L40.2 79.4L52.2 81.1L63.3 83.4L72.2 89.7L80.8 93.7L87.9 98.9L93.7 105.3L97.8 112.8L100.4 121.3L101.4 130.7L100.8 140.8L98.5 151.6L94.7 162.9L89.3 174.6L82.4 186.5L74.1 198.5L64.6 210.4L53.8 222.0L42.1 233.3L29.5 244.0L16.1 254.1L2.2 263.4L-12.1 271.9L-26.6 279.3L-41.1 285.6L-55.5 290.7L-69.5 294.6L-83.0 297.3L-95.8 298.5L-107.7 298.5L-118.6 297.1L-128.5 294.4L-137.0 290.4L-144.2 285.1Z" fill="#8e98b7"/>
<path d="M-149.2 268.8L-153.2 261.6L-155.7 253.5L-156.7 244.5L-156.1 234.8L-157.7 223.6L-155.0 212.3L-151.2 200.2L-146.2 187.6L-139.8 174.6L-131.9 161.3L-122.5 148.1L-111.4 135.3L-98.8 123.2L-84.9 112.3L-70.0 102.7L-54.5 94.8L-38.8 88.5L-23.2 83.9L-8.1 80.8L6.3 79.0L19.9 78.4L32.5 78.8L44.1 79.9L54.1 85.1L63.5 87.7L71.7 91.5L78.6 96.5L84.1 102.7L88.1 109.9L90.6 118.0L91.5 127.0L90.9 136.7L88.7 147.1L85.0 157.9L79.9 169.1L73.3 180.5L65.3 191.9L56.2 203.3L45.9 214.5L34.7 225.3L22.6 235.6L9.8 245.2L-3.5 254.2L-17.2 262.2L-31.1 269.3L-45.0 275.4L-58.8 280.3L-72.2 284.1L-85.1 286.6L-97.4 287.8L-108.8 287.7L-119.3 286.4L-128.7 283.8L-136.9 280.0L-143.8 275.0Z" fill="#959dba"/>
<path d="M-147.9 258.4L-151.7 251.6L-154.0 243.8L-154.9 235.3L-154.3 226.0L-155.8 215.3L-152.7 204.7L-148.6 193.4L-143.4 181.7L-137.0 169.6L-129.3 157.3L-120.2 145.2L-109.6 133.4L-97.8 122.4L-84.9 112.3L-71.1 103.4L-56.8 95.8L-42.3 89.7L-27.8 85.1L-13.7 81.7L-0.2 79.7L12.6 78.6L24.6 78.5L35.6 79.0L45.3 83.9L54.2 86.3L62.0 90.0L68.6 94.7L73.8 100.6L77.6 107.4L79.9 115.1L80.8 123.7L80.2 132.9L78.2 142.7L74.7 153.0L69.8 163.6L63.5 174.5L56.0 185.4L47.3 196.2L37.5 206.8L26.8 217.0L15.3 226.8L3.2 236.0L-9.5 244.5L-22.5 252.1L-35.7 258.9L-48.9 264.6L-61.9 269.3L-74.7 272.9L-86.9 275.2L-98.6 276.4L-109.5 276.4L-119.4 275.1L-128.3 272.6L-136.1 269.0L-142.7 264.2Z" fill="#9ba4c0"/>
<path d="M-145.6 247.4L-149.2 240.9L-151.5 233.7L-152.3 225.7L-151.7 217.0L-149.8 207.7L-149.9 196.8L-145.6 186.4L-140.4 175.6L-134.0 164.5L-126.5 153.4L-117.7 142.3L-107.8 131.6L-96.8 121.5L-84.9 112.3L-72.3 104.0L-59.1 96.9L-45.8 91.1L-32.5 86.4L-19.5 83.0L-6.9 80.6L5.0 79.1L16.2 78.5L26.5 82.2L35.9 83.4L44.3 85.7L51.6 89.1L57.7 93.6L62.6 99.1L66.2 105.5L68.4 112.7L69.3 120.8L68.7 129.4L66.8 138.7L63.5 148.3L58.9 158.3L53.0 168.5L45.9 178.7L37.7 188.9L28.6 198.8L18.5 208.5L7.7 217.7L-3.7 226.3L-15.6 234.3L-27.8 241.5L-40.2 247.8L-52.6 253.2L-64.9 257.6L-76.9 261.0L-88.4 263.2L-99.3 264.3L-109.6 264.2L-118.9 263.1L-127.3 260.7L-134.6 257.3L-140.8 252.8Z" fill="#a1aac6"/>
<path d="M-143.2 238.0L-146.5 232.0L-148.6 225.1L-149.4 217.6L-148.9 209.4L-147.1 200.7L-144.0 191.6L-142.9 180.6L-137.6 170.6L-131.4 160.4L-124.1 150.1L-115.7 140.0L-106.3 130.1L-96.0 120.9L-84.9 112.3L-73.2 104.6L-61.0 97.9L-48.7 92.2L-36.3 87.7L-24.2 84.1L-12.5 81.5L-1.4 79.8L9.4 82.4L19.0 82.4L27.8 83.6L35.7 85.8L42.6 89.0L48.4 93.2L53.0 98.4L56.4 104.4L58.4 111.2L59.2 118.8L58.7 127.0L56.9 135.7L53.8 144.8L49.4 154.2L43.9 163.8L37.2 173.4L29.6 183.0L20.9 192.3L11.5 201.4L1.3 210.1L-9.5 218.2L-20.7 225.7L-32.2 232.5L-43.9 238.5L-55.5 243.6L-67.1 247.7L-78.4 250.8L-89.2 252.9L-99.6 254.0L-109.2 253.9L-118.0 252.8L-125.9 250.6L-132.8 247.4L-138.6 243.2Z" fill="#a6aecb"/>
<path d="M-139.9 228.1L-143.0 222.5L-145.0 216.2L-145.7 209.1L-145.2 201.5L-143.6 193.4L-140.7 185.0L-136.6 176.2L-134.6 165.4L-128.4 156.1L-121.4 146.8L-113.5 137.5L-104.7 128.6L-95.2 120.1L-84.9 112.3L-74.1 105.2L-63.0 98.9L-51.7 93.5L-40.4 89.0L-29.2 85.5L-18.5 82.7L-7.6 84.3L2.0 83.4L11.0 83.4L19.2 84.4L26.5 86.5L32.9 89.5L38.3 93.4L42.6 98.2L45.7 103.8L47.7 110.2L48.4 117.2L47.9 124.8L46.2 132.9L43.3 141.4L39.3 150.1L34.1 159.0L27.9 168.0L20.8 176.9L12.8 185.6L4.0 194.1L-5.5 202.1L-15.5 209.7L-25.9 216.7L-36.7 223.0L-47.5 228.6L-58.4 233.3L-69.1 237.1L-79.6 240.1L-89.7 242.0L-99.3 243.0L-108.3 243.0L-116.5 241.9L-123.8 239.9L-130.2 236.9L-135.6 233.0Z" fill="#acb3d0"/>
<path d="M-135.7 217.6L-138.6 212.4L-140.3 206.6L-141.0 200.2L-140.6 193.2L-139.0 185.8L-136.4 178.1L-132.7 170.1L-128.0 161.9L-122.3 153.7L-118.5 143.2L-111.1 135.0L-103.0 127.0L-94.2 119.4L-84.9 112.3L-75.1 105.8L-65.1 100.0L-54.8 94.9L-44.6 90.6L-33.5 90.5L-23.9 87.8L-14.7 86.0L-5.9 85.2L2.3 85.2L9.8 86.1L16.5 88.0L22.4 90.7L27.3 94.3L31.2 98.7L34.1 103.9L35.9 109.7L36.5 116.1L36.1 123.1L34.6 130.5L31.9 138.2L28.2 146.2L23.5 154.4L17.8 162.6L11.3 170.7L3.9 178.7L-4.1 186.4L-12.8 193.8L-21.9 200.7L-31.5 207.1L-41.3 212.9L-51.2 218.0L-61.1 222.3L-71.0 225.8L-80.6 228.5L-89.8 230.3L-98.6 231.2L-106.8 231.1L-114.3 230.2L-121.0 228.3L-126.9 225.6L-131.8 222.0Z" fill="#b6beda"/>
<path d="M-131.7 209.1L-134.4 204.4L-136.0 199.0L-136.6 193.1L-136.2 186.7L-134.8 179.9L-132.4 172.7L-129.0 165.4L-124.6 157.9L-119.4 150.3L-113.4 142.8L-106.6 135.5L-101.6 125.7L-93.5 118.8L-84.9 112.3L-75.9 106.3L-66.7 100.9L-55.9 99.4L-46.7 95.4L-37.7 92.1L-28.8 89.7L-20.3 88.0L-12.3 87.2L-4.7 87.2L2.2 88.1L8.4 89.8L13.8 92.4L18.3 95.7L21.9 99.7L24.5 104.4L26.2 109.8L26.8 115.7L26.4 122.1L25.0 128.9L22.5 136.1L19.1 143.4L14.8 150.9L9.6 158.5L3.5 166.0L-3.2 173.3L-10.6 180.4L-18.6 187.2L-27.0 193.6L-35.8 199.4L-44.8 204.8L-54.0 209.4L-63.1 213.4L-72.2 216.7L-81.0 219.1L-89.5 220.8L-97.6 221.6L-105.1 221.6L-112.0 220.7L-118.2 219.0L-123.6 216.4L-128.1 213.1Z" fill="#bfc6e1"/>
<path d="M-126.8 199.9L-129.2 195.7L-130.7 190.9L-131.3 185.5L-130.9 179.7L-129.6 173.6L-127.4 167.2L-124.4 160.5L-120.4 153.8L-115.7 147.0L-110.3 140.2L-104.2 133.6L-97.5 127.2L-90.3 121.1L-82.7 115.3L-74.8 110.0L-66.7 105.2L-58.5 101.0L-50.2 97.4L-42.0 94.5L-34.1 92.3L-26.4 90.8L-19.1 90.1L-12.3 90.1L-6.1 90.9L-0.5 92.4L4.3 94.7L8.4 97.7L11.7 101.3L14.0 105.6L15.5 110.4L16.1 115.7L15.7 121.5L14.4 127.7L12.2 134.1L9.2 140.7L5.3 147.5L0.6 154.3L-4.9 161.1L-11.0 167.7L-17.7 174.1L-24.8 180.2L-32.4 186.0L-40.4 191.3L-48.5 196.0L-56.7 200.3L-65.0 203.9L-73.1 206.8L-81.1 209.0L-88.8 210.5L-96.1 211.2L-102.9 211.2L-109.1 210.4L-114.7 208.8L-119.5 206.6L-123.6 203.6Z" fill="#c7cfe8"/>
<path d="M-120.7 189.9L-122.8 186.2L-124.1 182.0L-124.6 177.3L-124.3 172.3L-123.1 166.9L-121.2 161.3L-118.5 155.5L-115.1 149.6L-111.0 143.7L-106.3 137.8L-101.0 132.0L-95.1 126.4L-88.9 121.1L-82.2 116.0L-75.3 111.4L-68.2 107.2L-61.0 103.5L-53.8 100.4L-46.7 97.9L-39.7 95.9L-33.1 94.6L-26.7 94.0L-20.8 94.0L-15.3 94.7L-10.5 96.1L-6.2 98.0L-2.7 100.6L0.2 103.8L2.3 107.5L3.6 111.8L4.0 116.4L3.7 121.5L2.6 126.8L0.7 132.4L-2.0 138.2L-5.4 144.1L-9.5 150.1L-14.3 156.0L-19.6 161.8L-25.4 167.4L-31.7 172.7L-38.3 177.7L-45.2 182.3L-52.3 186.5L-59.5 190.2L-66.7 193.3L-73.8 195.9L-80.8 197.8L-87.5 199.1L-93.8 199.8L-99.8 199.7L-105.2 199.0L-110.1 197.7L-114.3 195.7L-117.9 193.1Z" fill="#ced5ed"/>
<path d="M-112.7 178.5L-114.4 175.5L-115.5 172.0L-115.9 168.2L-115.6 164.0L-114.7 159.6L-113.1 155.0L-110.9 150.2L-108.1 145.4L-104.7 140.5L-100.8 135.6L-96.4 130.9L-91.6 126.3L-86.5 121.9L-81.0 117.7L-75.3 113.9L-69.5 110.5L-63.6 107.5L-57.6 104.9L-51.8 102.8L-46.1 101.2L-40.6 100.1L-35.3 99.6L-30.4 99.6L-26.0 100.2L-22.0 101.3L-18.5 102.9L-15.5 105.1L-13.2 107.7L-11.5 110.7L-10.4 114.2L-10.0 118.1L-10.3 122.2L-11.2 126.6L-12.8 131.2L-15.0 136.0L-17.8 140.9L-21.2 145.7L-25.1 150.6L-29.5 155.4L-34.3 160.0L-39.4 164.4L-44.9 168.5L-50.6 172.3L-56.4 175.7L-62.3 178.8L-68.3 181.3L-74.1 183.4L-79.8 185.0L-85.4 186.1L-90.6 186.6L-95.5 186.6L-99.9 186.0L-103.9 184.9L-107.4 183.3L-110.4 181.2Z" fill="#d4dbf1"/>
<path d="M-101.1 164.6L-102.3 162.4L-103.1 159.9L-103.3 157.2L-103.2 154.2L-102.5 151.1L-101.4 147.8L-99.8 144.4L-97.8 140.9L-95.4 137.5L-92.6 134.0L-89.5 130.6L-86.1 127.3L-82.4 124.2L-78.5 121.3L-74.5 118.6L-70.3 116.1L-66.1 113.9L-61.9 112.1L-57.7 110.6L-53.6 109.5L-49.7 108.7L-45.9 108.3L-42.5 108.4L-39.3 108.8L-36.4 109.5L-33.9 110.7L-31.8 112.2L-30.2 114.1L-29.0 116.3L-28.2 118.8L-27.9 121.5L-28.1 124.4L-28.8 127.6L-29.9 130.9L-31.5 134.3L-33.5 137.7L-35.9 141.2L-38.7 144.7L-41.8 148.1L-45.2 151.4L-48.9 154.5L-52.8 157.4L-56.8 160.1L-61.0 162.6L-65.2 164.7L-69.4 166.6L-73.6 168.1L-77.7 169.2L-81.6 170.0L-85.3 170.4L-88.8 170.3L-92.0 169.9L-94.8 169.1L-97.3 168.0L-99.4 166.5Z" fill="#dae0f5"/>
</g>
<path d="M179 272h2M29 85h1M35 130h2M181 248h1M42 139v3M20 139h1M123 148h1M140 165h1M157 274h2v1h1v2M110 196h1M65 143h2M14 95h1M156 268h2M2 96h1M170 219h2M56 99v2h2M38 109h2v2M117 162v3M43 110h4M67 97v3M33 84h3M172 181h1M154 220h1M162 158h1M149 150h2v1h1v2M158 167h2M182 259h4M172 179h1M154 192h1M154 259h2v2M176 185h1M86 107v3M96 103h1M6 113h1M132 130h2M97 125h2M114 150h2M171 189h1M146 177v3M27 118h2v2M180 265h1M173 173h1M128 248h2M135 162h1M163 240h2v2M142 242h2v2M160 219v3M180 260h1M39 106h2M21 103h2M177 251h2M121 229v2M131 131h1M65 112h1M173 181h1M124 206h1M5 89h1M138 262h1M71 112v3M164 217h2M134 155h1M108 117h2M156 242h1M29 140h2v2M19 144h3M136 210h1M162 271h2M20 118h1M131 199h1M146 158h2M130 201h1M174 198h1M151 143h1M151 211h1M129 129h2M17 110h3M41 113h1M149 158h1M179 238h2M150 202v3M36 98h2M165 189h2M149 200v3M148 172v2M175 200h1M153 250h2M58 93h2v2M72 92h2M176 213h2M98 269h1M54 146h2v2M148 160h2M153 152h1M160 278h3M173 274h1M149 271h2M174 235h1M126 135h2M95 105h2v1h1v2M163 205h2M58 177h1M110 133h2v1h1v2M177 216h2v1h1v2M111 140h2v2M76 99h1M172 264h1M157 266h1M182 247h2v2M94 152h1M111 110v3M174 253h3M140 151h2M13 89h1M117 158h2v2M14 91h2M12 95h2M146 217h2M110 135h1M145 134h1M72 113h1M149 256h2v2M126 132h1M124 118h1M135 135h1M118 126h1M163 255h1M59 98h2M102 112v2M144 277h1M46 119h1M164 205h1M82 143h3M48 124h1M63 113h1M4 161h1M173 247h1M32 95h2M142 185v3M167 186h1M8 93h2M26 105h1M48 118h1M158 274v2h2M172 212h1M113 143h1M112 137h1M90 105h2v2M118 126h1M71 137h2v2M120 171v2M178 278v2M67 110v2M161 167h1M177 235h2v1h1v2M107 116h1M164 242h1M103 116v2h2M134 156h2M181 192h2v1h1v2M125 152v2h2M126 247v2M143 209v2M72 99h1M166 244h1M152 270v2M163 265h4M107 122h1M127 128v2M166 172h1M139 241v2M179 252h1M30 119h2v1h1v2M67 146v3M162 214h2M48 97v2M156 250h2M167 235h1M172 182h1M171 211h2v2M96 118h1M102 109h1M173 264v2h2M138 241h1M123 172h2v2M32 112h2M143 148h4M4 143h2M6 131h3M101 109h1M165 193h1M177 262h1M29 95h2M99 138h1M150 271h2M175 203h1M125 131h1M173 179h3M139 266h2M116 207h2M26 87h1M51 92h1M19 152h1M169 209h2M161 180h1M60 93h2M10 103h2v1h1v2M156 251h1M167 238h1M158 278v2M10 175h1M174 250h2M144 221h1M141 172h2v2M178 237h3M112 126h2v1h1v2M142 146v2h2M163 213v3M53 167h1M99 115h1M35 86h2M121 139h4M167 215h1M129 125h2v2M153 189h1M19 86h1M161 231h3M144 258h1M55 88h4M108 190h3M26 122h1M12 119h1M131 179h2M103 129v2M68 114h2v2M64 95h2M108 127h2M80 97h1M150 238h1M119 134h1M157 149h2M160 257h1M141 211h2M154 189h4M18 89v3M42 88h1M97 107v3M116 129h2M155 177h1M175 217h4M31 110h1M160 227h1M51 92h2M76 113h1M177 243h2v2M108 134h3M84 105h1M150 180h1M117 131h1M145 263h1M160 152h1M35 106v2M138 217h1M115 117h2M150 233v2M21 110h2M114 202h1M8 94h2M159 179h4M166 175h1M141 168h2M129 146h1M6 98v2h2M69 117h1M132 238h1M175 267h2v1h1v2M124 122h2v2M172 199h1M41 94h1M123 148h1M49 92h1M21 88h1M160 153h2M141 136h3M80 131h2M96 108h1M129 121h2M170 277v2h2M165 196h1M161 266h1M179 232h4M124 190h1M72 130h1M158 202h2M64 149h3M155 190h2M168 244v2M157 203h1M163 160h1M97 127h1M158 228h1M180 257h1M131 186v2M156 180h1M125 140h1M128 148h2v1h1v2M49 99h2v2M44 107h2v2M149 250h1M167 253h1M65 141h1M135 169h2M82 110h2v1h1v2M180 182h2v2M3 138h1M165 279h2M115 113h3M39 150v3M80 109v3M84 98v2M155 172h1M144 194h1M22 98h1M101 113v2M12 113h1M154 183h1M63 119h2v1h1v2M100 115h1M45 95h4M157 224h1M101 128h2M161 269h2M35 98h1M134 224v2h2M181 204h1M178 261h4M177 250h1M180 217h2M162 174h3M158 168h2M173 228h2v1h1v2M50 88h2M30 85h1M123 129h2M125 127h2M137 278h2v1h1v2M6 99h1M168 217h2M143 191h2M40 107h2v2M179 245h3M94 138h1M173 260v2M47 94h2M156 191h2M27 132h1M164 202h1M173 217v2M55 130h4M145 152h2M177 255h2v2M166 265h2M115 111h1M126 215h1M52 105h2M143 182h1M182 189h2M0 94v2h2M49 119h1M136 200v2M178 248h1M83 98h1M140 141v2h2M174 250h2v2M169 214h1M80 99h2M180 275h2M167 215v3M62 145h1M171 262h1M115 194h1M170 204h2M153 170h1M75 96v2h2M147 250h1M101 128h1M160 271v2h2M12 130h2M161 180h1M137 235v3M147 242h1M68 175h2M43 94h1M168 276h1M10 108h2M92 142h1M166 182v2M105 197h1M73 97h1M164 185h2v2M38 103h1M103 157h2v2M104 163h2M137 186h1M177 233h2v2M107 121h4M57 112h1M174 238h2M81 98v2M133 152h1M161 234h2v2M37 102h2v2M113 159h1M38 183h2M6 105h1M86 125h1M173 276h1M168 248v3M164 273v2M167 169h1M154 145h1M108 164v3M148 149h1M5 114h2M153 251h2M43 115h2M83 178v3M178 187h1M171 169v3M123 262h1M81 96h1M97 116v2M151 175h1M167 169h1M135 171v2h2M172 179h1M138 212h1M3 103v2M144 143h3M181 213h2M134 261h1M132 132h2M79 106h2v2M139 134v3M125 134h1M48 156v2M174 193v3M156 188h1M151 245h2M173 275h1M7 124h2M151 153h2M140 150h1M148 187v3M92 123h1M169 263h2v1h1v2M91 106h3M158 162h1M156 216v2h2M121 168h1M38 230h2M153 249h4M162 252v2M75 96v2h2M101 128h1M170 206v2M94 117h1M7 99h1M144 157h3M145 265h4M28 117v3M136 161v2h2M155 155h1M123 225h1M170 203v2h2M178 260v3M181 277h4M73 108h2v2M151 152h2v1h1v2M124 168h2M14 185h3M154 272h1M176 218h1M47 92h1M37 135v2h2M167 182h2M117 195h1M128 140h3M122 215h2v2M113 111v2M130 153h2v1h1v2M12 90h2v1h1v2M81 123h1M25 122h4M145 148h1M152 238h1M160 159h2M156 264h2M173 252h1M16 110h2M129 159h1M73 149h2M163 180h2M146 171h4M25 95h1M157 230h1M168 242v2M139 200h2v2M141 158v2M170 246h1M142 252h1M158 266h3M96 124h1M145 236h3M22 132h1M162 192h1M122 193h2v1h1v2M8 138h4M162 272h2M22 99h1M159 153h1M141 161h2v2M150 234h1M140 170v3M120 154v2h2M150 192v2M167 259h1M181 206h1M162 274h1M156 164v2h2M16 92h4M165 236h1M20 91h1M177 257v2M158 274h2M98 160h1M171 207v3M165 239h1M151 271h1M69 100h1M116 176h1M76 102v3M146 155h4M94 110h2v2M131 201h2M138 205h2M180 211h2v2M136 237h2M135 126h2M179 273h4M171 230h2v1h1v2M163 236h2M149 236h1M153 163h4M84 98v2h2M160 193h2M163 184h2M90 100h1M86 124h1M154 163v3M152 205v3M151 257h1M146 234h1M80 94h1M98 146h2v2M109 134h2M27 152h2v1h1v2M50 110h4M59 107v2M141 188h2v1h1v2M48 108h4M152 163v2h2M54 102v3M178 269v2M159 161h2M32 190h2v1h1v2M118 130h1M179 212h2M177 245h3M143 148h2v2M157 203h1M158 230h1M167 218v2h2M152 183h1M163 191h1M108 133h1M167 184h4M132 151h2M171 232v2h2M50 118h2M169 261h3M91 142h2M179 188h2M139 205h2M147 224h1M148 149h2v2M30 103h2v1h1v2M82 142v2M151 221h2M134 171v2h2M141 180h1M43 93v3M114 123h1M135 141h1M147 184h2M166 264h2M145 177h3M115 169h2M146 237h3M74 106h2M91 156h2v2M179 238h1M122 127h4M165 240h3M137 166h1M56 104v2h2M142 165h2M160 242h2M143 195h1M124 230h3M142 207h2M182 273v2M172 199h1M58 93h2M166 275h1M128 120h1M169 163h2M149 156h2v2M167 164h1M133 187v2h2M65 99h1M92 210v3M45 94h2v2M178 249h2M148 140h2v2M180 195h1M121 133h1M123 167h3M66 92h1M158 162h1M158 181h1M170 255v2h2M113 112h1M146 141h1M102 115v2M28 102v3M132 242h1M155 270h2M179 256h1M181 261v2h2M62 179h1M159 274h2M136 161h2M156 219v2h2M169 255h1M160 270v2M64 99h1M123 127h3M151 143v2h2M55 98v3M66 138v3M163 174h1M139 143h2M80 95h1M157 147h2M155 222h1M71 241h4M174 203h1M77 123h1M179 227h1M132 156h1M141 200h1M177 273h1M173 216v3M118 124h1M149 198h2M21 90v2h2M171 219h1M167 167h2M180 244h1M178 212h2" fill="none" stroke="#000" stroke-width="1" shape-rendering="crispEdges" transform="translate(0,0.5)"/>
<path d="M-4 83 Q30 80.500 70 90.500 Q115 103 150 139" fill="none" stroke="#f4f6ff" stroke-width="2" opacity="0.55" filter="url(#plblur)"/>
</g>
</g></svg>
<div class="btn" style="left:474px;top:369px;width:70px;height:20px;"></div>
<div class="t" style="left:481.2px;top:373px;font-size:11px;line-height:13px;color:#a4a4a4;letter-spacing:-0.470px;">Set <u>C</u>amera</div>
<div class="a" style="left:545px;top:369px;width:69px;height:20px;background:#fafafa repeating-conic-gradient(#ffffff 0 25%,#f5f5f5 0 50%) 0 0/2px 2px;border:1px solid;border-color:#80849a #fff #fff #a8acb8;"></div>
<div class="t" style="left:549.2px;top:373px;font-size:11px;line-height:13px;color:#000;letter-spacing:-0.439px;"><u>V</u>iew Camera</div>
<div class="btn" style="left:615px;top:369px;width:18px;height:20px;"></div>
<div class="t" style="left:621.5px;top:373px;font-size:11px;line-height:13px;color:#000;">L</div>
<div class="btn" style="left:634px;top:369px;width:20px;height:20px;"></div>
<div class="t" style="left:638px;top:373px;font-size:11px;line-height:13px;color:#000;letter-spacing:-1.391px;">FO</div>
<div class="a" style="left:655px;top:369px;width:215px;height:24px;overflow:hidden"><div class="t" style="left:5px;top:3px;font-size:11px;line-height:13px;color:#000;letter-spacing:-0.210px;">x: 172541.697</div>
<div class="t" style="left:84.79999999999995px;top:3px;font-size:11px;line-height:13px;color:#000;letter-spacing:-0.214px;">y: -58909.032</div>
<div class="t" style="left:165px;top:3px;font-size:11px;line-height:13px;color:#000;letter-spacing:-0.138px;">z: 82207.5</div>
</div>
<div class="a" style="left:660px;top:385px;width:1px;height:1px;background:#444;"></div>
<div class="a" style="left:741px;top:385px;width:1px;height:1px;background:#444;"></div>
<div class="a" style="left:821px;top:385px;width:1px;height:1px;background:#444;"></div>
<!-- p50_network.py -->
<div class="a" style="left:474px;top:394px;width:396px;height:321px;background:#666666;overflow:hidden;"><div class="a" style="left:31px;top:17px;width:122px;height:61px;background:#6a7468;border:1px solid;border-color:#7c8c76 #5a6058 #5a6058 #7c8c76;"></div>
<div class="a" style="left:31px;top:92px;width:122px;height:55px;background:#786a6a;border:1px solid;border-color:#887878 #625858 #625858 #887878;"></div>
<div class="a" style="left:205px;top:24px;width:122px;height:47px;background:#64726c;border:1px solid;border-color:#74847c #56625c #56625c #74847c;"></div>
<div class="a" style="left:205px;top:102px;width:122px;height:31px;background:#666a80;border:1px solid;border-color:#767a94 #565a6c #565a6c #767a94;"></div>
<div class="a" style="left:205px;top:146px;width:47px;height:60px;background:#6e6e6e;border:1px solid;border-color:#7e7e7e #5c5c5c #5c5c5c #7e7e7e;"></div>
<div class="a" style="left:265px;top:146px;width:47px;height:60px;background:#757060;border:1px solid;border-color:#86816c #625e50 #625e50 #86816c;"></div>
<div class="a" style="left:326px;top:146px;width:47px;height:60px;background:#6c6c75;border:1px solid;border-color:#7b7b86 #5b5b63 #5b5b63 #7b7b86;"></div>
<div class="a" style="left:387px;top:146px;width:47px;height:60px;background:#786c62;border:1px solid;border-color:#887c70 #64594f #64594f #887c70;"></div>
<svg style="left:0px;top:0px;" width="396" height="321" viewBox="0 0 396 321"><g fill="none" stroke="#929292" stroke-width="1"><path d="M78 38 L53 46 L54 72 L43 112"/><path d="M80 128 L198 153 L226 159"/><path d="M226 121 L238 160"/><path d="M348 164 L396 181"/><path d="M348 164 L396 191"/></g></svg>
<div class="a" style="left:77px;top:34px;width:28px;height:5px;background:#8cc878;"></div>
<div class="a" style="left:38px;top:45px;width:30px;height:5px;background:#dc5a6c;"></div>
<div class="a" style="left:38px;top:64px;width:30px;height:5px;background:#dc5a6c;"></div>
<div class="a" style="left:39px;top:117px;width:30px;height:5px;background:#a88890;"></div>
<div class="a" style="left:213px;top:117px;width:29px;height:5px;background:#8088e0;"></div>
<div class="a" style="left:213px;top:159px;width:29px;height:5px;background:#e8e8e8;"></div>
<div class="a" style="left:213px;top:170px;width:29px;height:5px;background:#d8d8d8;"></div>
<div class="a" style="left:272px;top:159px;width:31px;height:5px;background:#f0e098;"></div>
<div class="a" style="left:272px;top:170px;width:31px;height:5px;background:#f0e098;"></div>
<div class="a" style="left:334px;top:159px;width:30px;height:5px;background:#b8a8e8;"></div>
<div class="a" style="left:394px;top:181px;width:4px;height:5px;background:#c89070;"></div>
<div class="a" style="left:394px;top:191px;width:4px;height:5px;background:#c89070;"></div>
<div class="t" style="left:77.3px;top:30px;font-size:11px;line-height:13px;color:#101010;letter-spacing:-0.363px;">Heightfield generate 01</div>
<div class="t" style="left:39.2px;top:41px;font-size:11px;line-height:13px;color:#d4d4d4;letter-spacing:-0.351px;">Heightfield shader 01</div>
<div class="t" style="left:39.2px;top:60px;font-size:11px;line-height:13px;color:#d4d4d4;letter-spacing:-0.408px;">Compute Terrain</div>
<div class="t" style="left:31.4px;top:88px;font-size:11px;line-height:13px;color:#fff;letter-spacing:-0.612px;">Shaders</div>
<div class="t" style="left:39.6px;top:113px;font-size:11px;line-height:13px;color:#c4c4cc;letter-spacing:-0.591px;">Base colours</div>
<div class="t" style="left:206px;top:20px;font-size:11px;line-height:13px;color:#fff;letter-spacing:-0.588px;">Water</div>
<div class="t" style="left:206px;top:98px;font-size:11px;line-height:13px;color:#fff;letter-spacing:-0.431px;">Atmosphere</div>
<div class="t" style="left:213px;top:113px;font-size:11px;line-height:13px;color:#d8d8e0;letter-spacing:-0.462px;">Atmosphere 01</div>
<div class="t" style="left:206.8px;top:141px;font-size:11px;line-height:13px;color:#fff;letter-spacing:-0.542px;">Objects</div>
<div class="t" style="left:266.6px;top:141px;font-size:11px;line-height:13px;color:#fff;letter-spacing:-0.268px;">Lighting</div>
<div class="t" style="left:327.9px;top:141px;font-size:11px;line-height:13px;color:#fff;letter-spacing:-0.918px;">Cameras</div>
<div class="t" style="left:388px;top:141px;font-size:11px;line-height:13px;color:#fff;letter-spacing:-0.595px;">Renderers</div>
<div class="t" style="left:213.5px;top:154px;font-size:11px;line-height:13px;color:#181818;letter-spacing:-0.532px;">Planet 01</div>
<div class="t" style="left:213.5px;top:165px;font-size:11px;line-height:13px;color:#181818;letter-spacing:-0.552px;">Background</div>
<div class="t" style="left:274.7px;top:154px;font-size:11px;line-height:13px;color:#181818;letter-spacing:-0.177px;">Enviro light</div>
<div class="t" style="left:274.7px;top:165px;font-size:11px;line-height:13px;color:#181818;letter-spacing:-0.459px;">Sunlight 01</div>
<div class="t" style="left:335.6px;top:154px;font-size:11px;line-height:13px;color:#28205c;letter-spacing:-0.636px;">Render Camera</div>
<div class="a" style="left:0px;top:0px;width:85px;height:25px;background:rgba(0,0,0,0.5);"></div>
<div class="t" style="left:32.4px;top:12px;font-size:11px;line-height:13px;color:#a4a4a4;letter-spacing:-0.661px;">Terrain</div>
<div class="t" style="left:5.6px;top:6px;font-size:13px;line-height:15px;color:#b0b0b0;letter-spacing:-0.264px;">Show help: h</div>
<div class="a" style="left:0px;top:110px;width:80px;height:23px;background:linear-gradient(180deg,#666e9e 0,#4b5388 35%,#4b5388 60%,#3a416c 130%);border-top:1px solid #666e9e;border-bottom:1px solid #3a416c;opacity:0.88;"></div>
<div class="t" style="left:4.7px;top:114px;font-size:12px;line-height:14px;color:#e4e4f0;letter-spacing:0.010px;">Atmosphere</div>
<div class="a" style="left:0px;top:134px;width:80px;height:23px;background:linear-gradient(180deg,#666280 0,#524e6a 35%,#524e6a 60%,#3e3a52 130%);border-top:1px solid #666280;border-bottom:1px solid #3e3a52;opacity:0.88;"></div>
<div class="t" style="left:4.7px;top:138px;font-size:12px;line-height:14px;color:#dcdce4;letter-spacing:-0.141px;">Cameras</div>
<div class="a" style="left:0px;top:158px;width:80px;height:23px;background:linear-gradient(180deg,#90845a 0,#7a6e46 35%,#7a6e46 60%,#5e5434 130%);border-top:1px solid #90845a;border-bottom:1px solid #5e5434;"></div>
<div class="t" style="left:4.7px;top:162px;font-size:12px;line-height:14px;color:#ece4c0;letter-spacing:0.119px;">Lighting</div>
<div class="a" style="left:0px;top:182px;width:80px;height:23px;background:linear-gradient(180deg,#7c7c7c 0,#686868 35%,#686868 60%,#525252 130%);border-top:1px solid #7c7c7c;border-bottom:1px solid #525252;"></div>
<div class="t" style="left:4.7px;top:186px;font-size:12px;line-height:14px;color:#dcdcdc;letter-spacing:0.145px;">Objects</div>
<div class="a" style="left:0px;top:206px;width:80px;height:23px;background:linear-gradient(180deg,#806458 0,#6a4e42 35%,#6a4e42 60%,#523a30 130%);border-top:1px solid #806458;border-bottom:1px solid #523a30;"></div>
<div class="t" style="left:4.7px;top:210px;font-size:12px;line-height:14px;color:#e4d4cc;letter-spacing:-0.048px;">Renderers</div>
<div class="a" style="left:0px;top:230px;width:80px;height:23px;background:linear-gradient(180deg,#905858 0,#7a4444 35%,#7a4444 60%,#5e3232 130%);border-top:1px solid #905858;border-bottom:1px solid #5e3232;"></div>
<div class="t" style="left:4.7px;top:234px;font-size:12px;line-height:14px;color:#e8d0d0;letter-spacing:0.014px;">Shaders</div>
<div class="a" style="left:0px;top:254px;width:80px;height:23px;background:linear-gradient(180deg,#5a784c 0,#466438 35%,#466438 60%,#344c28 130%);border-top:1px solid #5a784c;border-bottom:1px solid #344c28;"></div>
<div class="t" style="left:4.7px;top:258px;font-size:12px;line-height:14px;color:#d4e4cc;letter-spacing:0.145px;">Terrain</div>
<div class="a" style="left:0px;top:278px;width:80px;height:23px;background:linear-gradient(180deg,#4c786c 0,#386458 35%,#386458 60%,#284c42 130%);border-top:1px solid #4c786c;border-bottom:1px solid #284c42;"></div>
<div class="t" style="left:4.7px;top:282px;font-size:12px;line-height:14px;color:#cce4dc;letter-spacing:-0.013px;">Water</div>
</div>
<!-- p60_bottom.py -->
<div class="btn" style="left:6px;top:717px;width:100px;height:21px;"></div>
<div class="t" style="left:14.6px;top:721px;font-size:11px;line-height:13px;color:#000;letter-spacing:-0.222px;">Project Settings...</div>
<div class="sunk" style="left:114px;top:716px;width:39px;height:19px;"></div>
<div class="t" style="left:117.5px;top:720px;font-size:11px;line-height:13px;color:#000;">1</div>
<div class="btn" style="left:162px;top:717px;width:20px;height:20px;"></div>
<div class="btn" style="left:182px;top:717px;width:20px;height:20px;"></div>
<div class="btn" style="left:202px;top:717px;width:20px;height:20px;"></div>
<div class="btn" style="left:222px;top:717px;width:20px;height:20px;"></div>
<div class="btn" style="left:242px;top:717px;width:21px;height:20px;"></div>
<svg style="left:162px;top:721px;" width="100" height="12" viewBox="0 0 100 12"><rect x="4" y="0" width="2" height="11" fill="#585858"/><path d="M11.5 0 L6 5.5 L11.5 11 Z" fill="#585858"/><path d="M16.5 0 L11 5.5 L16.5 11 Z" fill="#585858"/><rect x="24" y="0" width="2" height="11" fill="#585858"/><path d="M36 0 L26 5.5 L36 11 Z" fill="#585858"/><path d="M44.500 -0.500 L56.500 5.500 L44.500 11.500 Z" fill="#5a9450" stroke="#467a3e" stroke-width="0.6"/><path d="M64 0 L74 5.5 L64 11 Z" fill="#585858"/><rect x="74" y="0" width="2" height="11" fill="#585858"/><path d="M84 0 L89.5 5.5 L84 11 Z" fill="#585858"/><path d="M89.5 0 L95.0 5.5 L89.5 11 Z" fill="#585858"/><rect x="95" y="0" width="2" height="11" fill="#585858"/></svg>
<div class="a" style="left:282px;top:724px;width:437px;height:2px;background:#989cac;"></div>
<div class="a" style="left:282px;top:726px;width:437px;height:1px;background:#fff;"></div>
<div class="a" style="left:276px;top:719px;width:7px;height:14px;background:#f7f7f7;border:1px solid;border-color:#fff #707484 #707484 #fff;box-shadow:inset -1px -1px 0 #a0a4b2;"></div>
<div class="a" style="left:738px;top:720px;width:1px;height:13px;background:#a0a4b2;"></div>
<svg style="left:749px;top:720px;" width="14" height="14" viewBox="0 0 14 14"><path d="M4 0.500 H10 L13.500 4 V10 L10 13.500 H4 L0.500 10 V4 Z" fill="#e01818" stroke="#a01010" stroke-width="0.8"/><path d="M3 3.500 L5.500 2" stroke="#f99" stroke-width="1"/></svg>
<div class="t" style="left:768px;top:721px;font-size:11px;line-height:13px;color:#000;">0</div>
<svg style="left:803px;top:720px;" width="15" height="14" viewBox="0 0 15 14"><path d="M7.500 0.800 L14.300 13.200 H0.700 Z" fill="#f4e81c" stroke="#8c8410" stroke-width="0.9"/><rect x="6.800" y="4.500" width="1.500" height="5" fill="#000"/><rect x="6.800" y="10.500" width="1.500" height="1.500" fill="#000"/></svg>
<div class="t" style="left:822px;top:721px;font-size:11px;line-height:13px;color:#000;">0</div>
<div class="a" style="left:4px;top:739px;width:866px;height:1px;background:#a0a4b2;"></div>
</body>
</html>
